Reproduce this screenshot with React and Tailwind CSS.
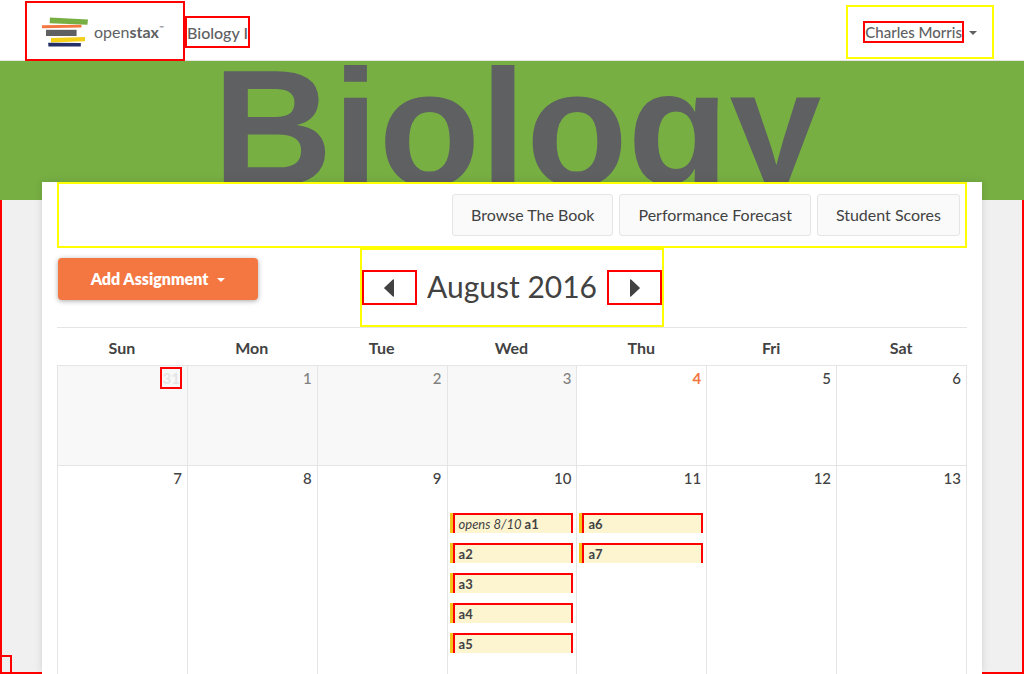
const weekdays = ['Sun', 'Mon', 'Tue', 'Wed', 'Thu', 'Fri', 'Sat'];

const weeks = [
  [
    { day: 31, state: 'outside' },
    { day: 1, state: 'past' },
    { day: 2, state: 'past' },
    { day: 3, state: 'past' },
    { day: 4, state: 'today' },
    { day: 5, state: 'future' },
    { day: 6, state: 'future' },
  ],
  [
    { day: 7, state: 'future' },
    { day: 8, state: 'future' },
    { day: 9, state: 'future' },
    {
      day: 10,
      state: 'future',
      plans: [
        { opens: 'opens 8/10', title: 'a1' },
        { title: 'a2' },
        { title: 'a3' },
        { title: 'a4' },
        { title: 'a5' },
      ],
    },
    { day: 11, state: 'future', plans: [{ title: 'a6' }, { title: 'a7' }] },
    { day: 12, state: 'future' },
    { day: 13, state: 'future' },
  ],
];

const dayStyles = {
  outside: 'border-2 border-[#ff0000] font-bold text-[#e5e5e5]',
  past: 'py-[2px] font-medium text-[#818181]',
  today: 'py-[2px] font-bold text-[#f47641]',
  future: 'py-[2px] font-medium text-[#424242]',
};

function Caret() {
  return (
    <svg aria-hidden="true" className="mt-[2px] h-1 w-2" viewBox="0 0 8 4" fill="currentColor">
      <path d="M0 0h8L4 4z" />
    </svg>
  );
}

function Logo() {
  return (
    <a
      href="#home"
      aria-label="openstax"
      className="mt-px -mb-px flex h-[60px] w-40 shrink-0 items-center gap-[5px] border-2 border-[#ff0000] px-[15px] pt-[2px]"
    >
      <svg aria-hidden="true" className="h-[30px] w-[47px] shrink-0" viewBox="0 0 47 30">
        <path d="M8 .4l38 2.2-.6 5.2L7.6 6.2z" fill="#77af43" />
        <path d="M0 8.2l39.5-.4v2.8L0 11.2z" fill="#f47641" />
        <path d="M4 12.8h30.6v6.2H4z" fill="#5e6062" />
        <path d="M9 21l34-1.1v4.3L9 25.5z" fill="#f4d019" />
        <path d="M6.2 25.8l32.6.1v3.6H6.4z" fill="#232f66" />
      </svg>
      <span className="flex text-base leading-5 text-[#5e6062]">
        <span className="font-normal">open</span>
        <span className="font-bold">stax</span>
        <span className="text-[6px] leading-3">™</span>
      </span>
    </a>
  );
}

function Header() {
  return (
    <header className="flex h-[61px] items-start justify-between border-b border-[#e5e5e5] bg-white pr-[30px] pl-[25px] text-base text-[#5f6163]">
      <div className="flex items-start">
        <Logo />
        <a
          href="#course"
          className="mt-4 flex h-8 items-center border-2 border-[#ff0000] pt-[2px] font-medium whitespace-nowrap"
        >
          Biology I
        </a>
      </div>
      <button
        type="button"
        className="mt-[5px] flex h-[54px] items-center gap-[5px] border-2 border-[#ffff00] px-[15px]"
      >
        <span className="border-2 border-[#ff0000] text-[15px] leading-[18px] font-medium whitespace-nowrap">
          Charles Morris
        </span>
        <Caret />
      </button>
    </header>
  );
}

function CourseLinks() {
  return (
    <nav className="flex justify-end gap-[6px] border-2 border-[#ffff00] py-[10px] pr-[5px]">
      {['Browse The Book', 'Performance Forecast', 'Student Scores'].map((label) => (
        <button
          key={label}
          type="button"
          className="h-[42px] rounded-[3px] border border-[#e5e5e5] bg-[#fafafa] px-[18px] text-base whitespace-nowrap text-[#424242]"
        >
          {label}
        </button>
      ))}
    </nav>
  );
}

function Toolbar() {
  return (
    <div className="grid grid-cols-[1fr_auto_1fr]">
      <div className="pt-[10px] pl-px">
        <button
          type="button"
          className="flex h-[42px] w-[200px] items-center justify-center gap-[9px] rounded-[4px] bg-[#f47641] text-base font-extrabold text-white shadow-[0_1px_5px_rgba(0,0,0,0.35)]"
        >
          Add Assignment
          <Caret />
        </button>
      </div>
      <div className="flex h-[79px] items-center gap-[10px] border-2 border-[#ffff00] text-[#424242]">
        <button
          type="button"
          aria-label="Previous month"
          className="flex h-[35px] w-[55px] items-center justify-center border-2 border-[#ff0000]"
        >
          <svg aria-hidden="true" className="h-[18px] w-[10px]" viewBox="0 0 10 18" fill="currentColor">
            <path d="M9.2.3Q10 0 10 1v16q0 1-.8.7L.4 9.6Q0 9 .4 8.4z" />
          </svg>
        </button>
        <h1 className="pb-1 text-[30px] leading-10 font-normal whitespace-nowrap">August 2016</h1>
        <button
          type="button"
          aria-label="Next month"
          className="flex h-[35px] w-[55px] items-center justify-center border-2 border-[#ff0000]"
        >
          <svg aria-hidden="true" className="h-[18px] w-[10px]" viewBox="0 0 10 18" fill="currentColor">
            <path d="M.8.3Q0 0 0 1v16q0 1 .8.7l8.8-8.1Q10 9 9.6 8.4z" />
          </svg>
        </button>
      </div>
    </div>
  );
}

function DayCell({ day, state, plans = [] }) {
  const muted = state === 'outside' || state === 'past';
  return (
    <td
      className={`border-t border-l border-[#e5e5e5] p-0 align-top last:shadow-[1px_0_0_#e5e5e5] ${muted ? 'bg-[#f8f8f8]' : ''}`}
    >
      <div className="flex h-[47px] items-start justify-end pt-px pr-[5px]">
        <span className={`h-[22px] text-[15px] leading-[18px] ${dayStyles[state]}`}>{day}</span>
      </div>
      <ul className="flex flex-col gap-[10px] pr-[3px] pl-[2px]">
        {plans.map((plan) => (
          <li key={plan.title} className="border-l-[3px] border-[#f4c51c]">
            <a
              href={`#${plan.title}`}
              className="block h-5 border-2 border-b-0 border-[#ff0000] bg-[#fdf4d0] px-1 text-[13px] leading-[18px] font-bold text-[#424242]"
            >
              {plan.opens && <em className="font-normal">{plan.opens} </em>}
              {plan.title}
            </a>
          </li>
        ))}
      </ul>
    </td>
  );
}

function Calendar() {
  return (
    <div className="border-t border-[#e5e5e5] pr-px">
      <table className="w-full table-fixed border-separate border-spacing-0">
        <thead>
          <tr>
            {weekdays.map((name) => (
              <th key={name} scope="col" className="h-[37px] p-0 pt-[2px] text-base leading-5 font-bold text-[#424242]">
                {name}
              </th>
            ))}
          </tr>
        </thead>
        <tbody>
          {weeks.map((week, index) => (
            <tr key={week[0].day} className={index === 0 ? 'h-[100px]' : 'h-[209px]'}>
              {week.map((cell) => (
                <DayCell key={cell.day} {...cell} />
              ))}
            </tr>
          ))}
        </tbody>
      </table>
    </div>
  );
}

export default function App() {
  return (
    <div className="flex min-h-screen flex-col font-[Lato,sans-serif]">
      <Header />
      <div className="flex h-[139px] justify-center overflow-hidden bg-[#77af43] pl-[10px]">
        <p className="font-['Liberation_Sans',Arial,sans-serif] text-[166px] leading-[133px] font-bold text-[#5e6062]">
          Biology
        </p>
      </div>
      <main className="relative flex-1 border-2 border-t-0 border-[#ff0000] bg-[#f0f0f0] px-10">
        <span className="absolute bottom-0 left-0 h-[17px] w-[10px] border-t-2 border-r-2 border-[#ff0000]" />
        <section className="relative mx-auto -mt-[18px] -mb-[2px] max-w-[940px] bg-white px-[15px] shadow-[0_0_8px_rgba(0,0,0,0.12)]">
          <CourseLinks />
          <Toolbar />
          <Calendar />
        </section>
      </main>
    </div>
  );
}
